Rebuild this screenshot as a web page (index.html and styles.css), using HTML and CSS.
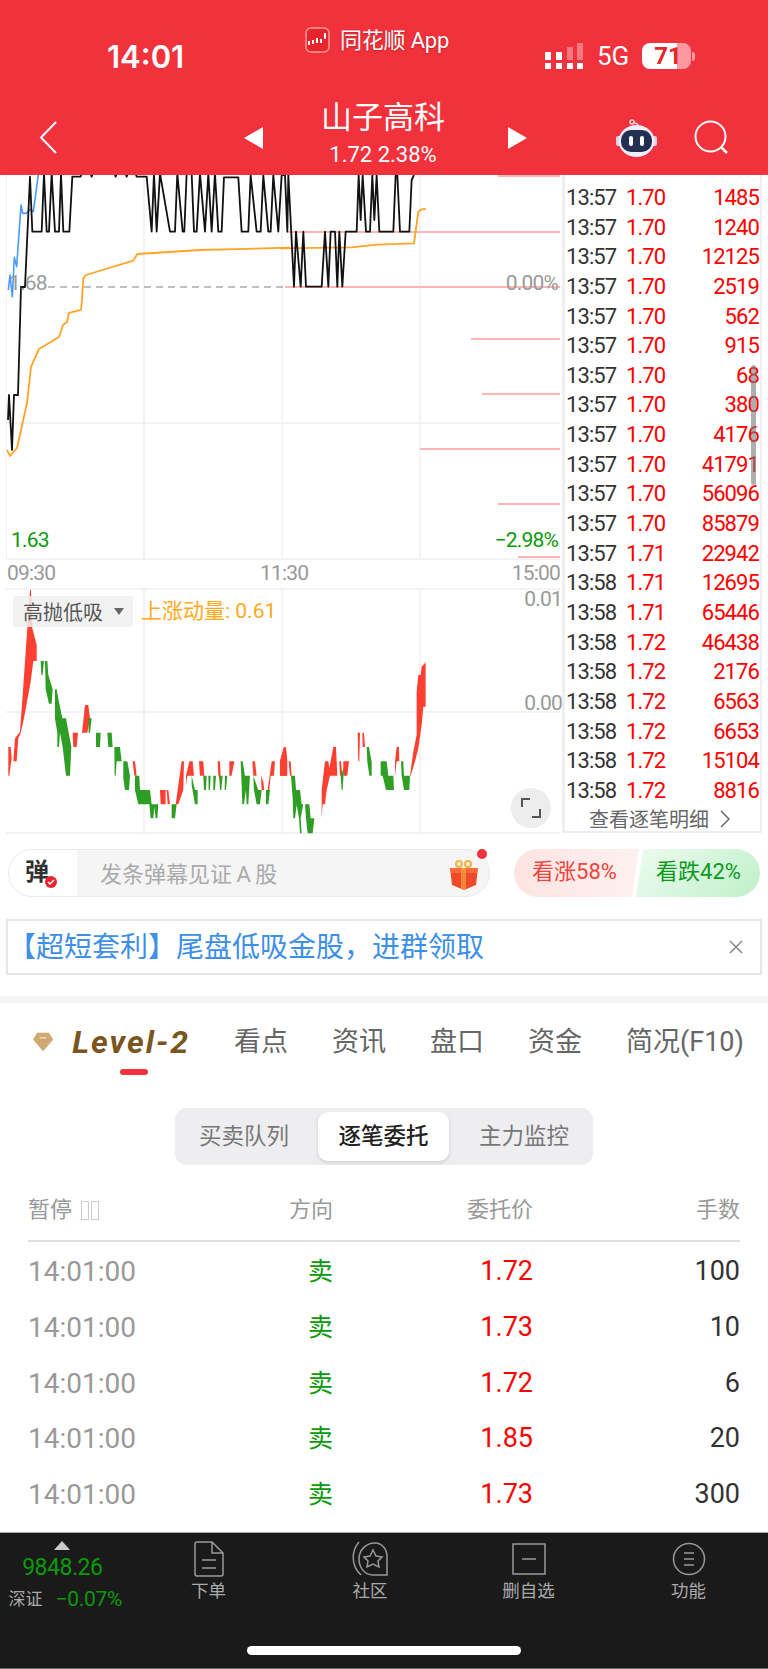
FILE: index.html
```html
<!DOCTYPE html>
<html lang="zh-CN">
<head>
    <meta charset="UTF-8">
    <meta name="viewport" content="width=device-width, initial-scale=1.0">
    <title>山子高科</title>
    <link rel="stylesheet" href="styles.css">
</head>
<body>
    <header class="top">
        <div class="status">
            <div class="clock">14:01</div>
            <div class="app-name">
                <svg class="app-icon" width="25" height="26" viewBox="0 0 25 26">
                    <rect x="1" y="1" width="23" height="24" rx="5" fill="#e8242c" stroke="#ff9a9a" stroke-width="1.5"/>
                    <path d="M4 14v4M8 13v4M12 11v5M16 12v4M20 6v6" stroke="#fff" stroke-width="2" fill="none"/>
                </svg>
                <span>同花顺 App</span>
            </div>
            <div class="sys">
                <svg width="38" height="26" viewBox="0 0 38 26">
                    <path d="M0 9h6v8H0zM11 9h6v8h-6z" fill="#fff"/>
                    <path d="M22 4h6v13h-6zM32 0h6v17h-6z" fill="#fff" opacity=".35"/>
                    <path d="M0 20h6v6H0zM11 20h6v6h-6zM22 20h6v6h-6zM32 20h6v6h-6z" fill="#fff"/>
                </svg>
                <span class="net">5G</span>
                <div class="battery">71</div>
                <div class="battery-nub"></div>
            </div>
        </div>
        <nav class="nav">
            <svg width="18" height="33" viewBox="0 0 18 33"><path d="M17 1L2 16.500 17 32" fill="none" stroke="#fff" stroke-width="2"/></svg>
            <div class="stock">
                <i class="tri tri-left"></i>
                <div class="stock-name">
                    <div class="name">山子高科</div>
                    <div class="change">1.72 2.38%</div>
                </div>
                <i class="tri tri-right"></i>
            </div>
            <svg width="41" height="38" viewBox="0 0 41 38">
                <circle cx="16" cy="3" r="2" fill="none" stroke="#f6d5d8" stroke-width="1.5"/>
                <path d="M18 4c3 0 4 1 4 3" fill="none" stroke="#f6d5d8" stroke-width="1.5"/>
                <rect x="0" y="17" width="5" height="10" rx="2" fill="#d9d2ee"/>
                <rect x="36" y="17" width="5" height="10" rx="2" fill="#d9d2ee"/>
                <ellipse cx="20.500" cy="22" rx="18" ry="16" fill="#f2eefc"/>
                <rect x="5" y="11" width="31" height="22" rx="10" fill="#233052"/>
                <rect x="13" y="17" width="4" height="10" rx="2" fill="#fff"/>
                <rect x="24" y="17" width="4" height="10" rx="2" fill="#fff"/>
            </svg>
            <svg width="36" height="36" viewBox="0 0 36 36">
                <circle cx="16.500" cy="16.500" r="15" fill="none" stroke="#fff" stroke-width="2"/>
                <path d="M27 27l6 6" stroke="#fff" stroke-width="2.500" fill="none"/>
            </svg>
        </nav>
    </header>

    <section class="quote">
        <div class="charts">
            <svg class="plot" width="556" height="660" viewBox="6 175 556 660">
                <!-- grid -->
                <path class="grid" d="M6 175V559M144 175V559M282 175V559M420 175V559M6 423H560M6 559H560M6 589H560M6 712H560M6 833H560M144 589V833M282 589V833M420 589V833"/>
                <path class="dash" d="M48 287H560"/>
                <!-- order lines -->
                <path class="order" d="M498 176H560M287 232H560M285 287H560M471 339H560M482 394H560M420 449H560M498 504H560M518 557H560"/>

                <g transform="translate(0 170) scale(.3333)">
                    <polyline class="ln ln-blue" points="25,360 30,315 37,380 43,262 50,290 63,105 68,130 78,130 90,118 100,125 115,15"/>
                    <polyline class="ln ln-black" points="24,750 27,675 36,840 42,675 54,675 63,351 75,351 90,20 97,185 125,185 132,10 140,185 147,185 155,10 165,185 177,185 183,10 190,185 208,185 217,20 242,20 245,5 270,5 275,20 280,5 342,5 347,20 352,5 375,5 380,20 385,5 405,5 410,20 440,20 455,185 462,10 470,185 480,10 510,185 525,185 532,10 548,185 553,185 560,10 575,10 582,185 590,185 600,10 615,185 625,10 635,185 645,10 655,185 665,185 672,22 715,22 725,185 745,185 752,15 770,185 782,185 790,15 805,185 812,185 820,15 835,185 845,15"/>
                    <polyline class="ln ln-orange" points="21,840 30,858 51,834 81,699 93,591 117,537 177,501 189,465 201,456 207,429 243,420 246,390 250,325 258,315 400,272 412,252 600,240 870,233"/>
                </g>
                <g transform="translate(280 170) scale(.3333)">
                    <polyline class="ln ln-orange" points="0,235 215,232 290,224 402,220 415,125 425,118 437,117"/>
                    <polyline class="ln ln-black" points="5,15 15,15 22,185 25,15 42,350 48,185 62,350 70,185 78,350 125,350 135,185 145,350 152,185 165,185 172,350 178,185 187,350 197,185 230,185 236,15 242,150 248,15 258,185 270,185 277,15 283,150 290,15 298,185 340,185 347,15 352,15 360,185 388,185 395,30 402,15"/>
                </g>

                <!-- lower chart bars -->
                <g class="bars-up" transform="translate(0 585) scale(.3333)">
                    <polygon points="25,486 32,486 35,520 28,572 25,572"/>
                    <polygon points="40,529 45,460 60,440 68,330 75,230 90,15 93,15 97,130 110,180 110,228 100,228 92,290 72,400 62,445 55,460 50,529"/>
                    <polygon points="218,443 234,443 230,486 220,486"/>
                    <polygon points="246,443 255,360 265,360 270,400 262,443"/>
                    <polygon points="398,529 405,529 410,572 403,572"/>
                    <polygon points="480,615 497,615 497,658 482,658"/>
                    <polygon points="500,615 505,615 510,658 503,658"/>
                    <polygon points="527,658 545,529 552,529 550,615 535,658"/>
                    <polygon points="558,572 568,529 578,529 582,572 562,572 560,600"/>
                    <polygon points="597,529 610,529 613,572 600,572"/>
                    <polygon points="653,529 660,529 663,600 655,570"/>
                    <polygon points="688,529 703,529 695,572 688,572"/>
                    <polygon points="757,529 765,529 770,572 760,572"/>
                    <polygon points="783,572 790,590 793,615 785,615"/>
                    <polygon points="815,529 825,529 822,572 812,572 808,615 803,615"/>
                    <polygon points="840,529 852,486 858,486 862,529 862,572 840,572"/>
                </g>
                <g class="bars-down" transform="translate(0 585) scale(.3333)">
                    <polygon points="122,228 132,228 128,270 124,270"/>
                    <polygon points="135,228 142,228 145,270 158,313 155,356 147,356 137,313"/>
                    <polygon points="165,313 170,313 178,356 187,400 198,400 214,486 210,572 198,572 188,486 180,443 177,486 172,486 172,443 165,400"/>
                    <polygon points="265,400 275,400 270,443 266,443"/>
                    <polygon points="288,443 302,443 300,486 288,486"/>
                    <polygon points="322,443 335,443 338,486 325,486"/>
                    <polygon points="343,486 360,486 365,529 350,529 347,572 344,572"/>
                    <polygon points="370,529 382,529 390,572 387,615 375,615 370,580"/>
                    <polygon points="405,572 418,572 420,615 450,615 455,658 475,658 472,700 467,700 463,665 460,700 452,700 448,658 415,658 405,615"/>
                    <polygon points="515,658 530,658 525,700 515,700"/>
                    <polygon points="575,572 585,615 593,615 593,658 585,658 575,600"/>
                    <polygon points="610,572 620,572 618,615 612,615"/>
                    <polygon points="625,572 632,572 630,615 626,615"/>
                    <polygon points="640,572 648,572 645,615 640,615"/>
                    <polygon points="658,572 668,572 664,615 660,615"/>
                    <polygon points="675,572 682,572 678,615 674,615"/>
                    <polygon points="722,529 728,529 735,572 750,572 745,658 740,658 738,615 732,658 727,658 725,600"/>
                    <polygon points="760,572 775,615 785,615 780,658 770,658 762,615"/>
                    <polygon points="798,615 810,615 805,658 798,658"/>
                </g>
                <g class="bars-up" transform="translate(280 585) scale(.3333)">
                    <polygon points="0,529 12,486 18,486 20,572 0,572"/>
                    <polygon points="26,529 32,529 35,572 30,572"/>
                    <polygon points="125,615 135,529 145,529 148,550 160,486 168,486 172,572 150,572 140,615 135,658 128,658 125,700"/>
                    <polygon points="178,529 183,529 187,572 180,572"/>
                    <polygon points="190,529 207,529 202,572 190,572"/>
                    <polygon points="233,443 240,443 238,529 235,529"/>
                    <polygon points="247,443 252,443 255,486 248,486"/>
                    <polygon points="345,529 350,486 357,486 358,529 350,529 345,572"/>
                    <polygon points="390,572 400,500 410,450 410,320 415,270 422,270 425,245 437,232 437,365 430,365 425,420 415,490 405,530 392,572"/>
                </g>
                <g class="bars-down" transform="translate(280 585) scale(.3333)">
                    <polygon points="33,572 45,572 48,615 60,615 65,658 70,658 62,700 65,745 60,745 57,700 50,660 45,700 40,700 38,640"/>
                    <polygon points="75,658 88,658 92,700 103,700 98,745 83,745 78,700"/>
                    <polygon points="182,572 192,545 188,615 185,615"/>
                    <polygon points="260,486 267,486 275,530 275,572 268,572 262,530"/>
                    <polygon points="302,529 320,529 325,572 340,572 342,615 318,615 308,572 302,572"/>
                    <polygon points="363,529 370,529 372,572 390,572 388,615 372,615 365,572"/>
                </g>
            </svg>

            <span class="tag tag-prev">1.68</span>
            <span class="tag tag-zero">0.00%</span>
            <span class="tag tag-low">1.63</span>
            <span class="tag tag-lowpct">−2.98%</span>
            <span class="tag tag-t1">09:30</span>
            <span class="tag tag-t2">11:30</span>
            <span class="tag tag-t3">15:00</span>
            <span class="tag tag-v1">0.01</span>
            <span class="tag tag-v0">0.00</span>

            <div class="signal-pick">高抛低吸<i class="caret"></i></div>
            <div class="momentum">上涨动量: 0.61</div>
            <div class="expand">
                <svg width="22" height="22" viewBox="0 0 22 22"><path d="M10 2H2v8M12 20h8v-8" fill="none" stroke="#555" stroke-width="2"/></svg>
            </div>
        </div>

        <aside class="ticks">
            <div class="tick"><span>13:57</span><b>1.70</b><b class="vol">1485</b></div>
            <div class="tick"><span>13:57</span><b>1.70</b><b class="vol">1240</b></div>
            <div class="tick"><span>13:57</span><b>1.70</b><b class="vol">12125</b></div>
            <div class="tick"><span>13:57</span><b>1.70</b><b class="vol">2519</b></div>
            <div class="tick"><span>13:57</span><b>1.70</b><b class="vol">562</b></div>
            <div class="tick"><span>13:57</span><b>1.70</b><b class="vol">915</b></div>
            <div class="tick"><span>13:57</span><b>1.70</b><b class="vol">68</b></div>
            <div class="tick"><span>13:57</span><b>1.70</b><b class="vol">380</b></div>
            <div class="tick"><span>13:57</span><b>1.70</b><b class="vol">4176</b></div>
            <div class="tick"><span>13:57</span><b>1.70</b><b class="vol">41791</b></div>
            <div class="tick"><span>13:57</span><b>1.70</b><b class="vol">56096</b></div>
            <div class="tick"><span>13:57</span><b>1.70</b><b class="vol">85879</b></div>
            <div class="tick"><span>13:57</span><b>1.71</b><b class="vol">22942</b></div>
            <div class="tick"><span>13:58</span><b>1.71</b><b class="vol">12695</b></div>
            <div class="tick"><span>13:58</span><b>1.71</b><b class="vol">65446</b></div>
            <div class="tick"><span>13:58</span><b>1.72</b><b class="vol">46438</b></div>
            <div class="tick"><span>13:58</span><b>1.72</b><b class="vol">2176</b></div>
            <div class="tick"><span>13:58</span><b>1.72</b><b class="vol">6563</b></div>
            <div class="tick"><span>13:58</span><b>1.72</b><b class="vol">6653</b></div>
            <div class="tick"><span>13:58</span><b>1.72</b><b class="vol">15104</b></div>
            <div class="tick"><span>13:58</span><b>1.72</b><b class="vol">8816</b></div>
            <div class="ticks-more">查看逐笔明细
                <svg width="10" height="18" viewBox="0 0 10 18"><path d="M1 1l8 8-8 8" fill="none" stroke="#666" stroke-width="1.500"/></svg>
            </div>
            <div class="scroll-thumb"></div>
        </aside>
    </section>

    <section class="actions">
        <div class="danmu">
            <div class="danmu-btn">
                <span>弹</span>
                <svg class="danmu-check" width="12" height="12" viewBox="0 0 12 12">
                    <circle cx="6" cy="6" r="6" fill="#e8242c"/>
                    <path d="M3 6l2 2 4-4" fill="none" stroke="#fff" stroke-width="1.500"/>
                </svg>
            </div>
            <div class="danmu-text">发条弹幕见证 A 股</div>
            <svg class="gift" width="30" height="30" viewBox="0 0 30 30">
                <circle cx="10" cy="4" r="3" fill="none" stroke="#f2b33d" stroke-width="2"/>
                <circle cx="19" cy="4" r="3" fill="none" stroke="#f2b33d" stroke-width="2"/>
                <path d="M1 8h28l-2 17-12 5-12-5z" fill="#ee4b2b"/>
                <path d="M1 8h28l-1 5H2z" fill="#f86a3a"/>
                <path d="M12 8h5v22h-3l-2-1z" fill="#f9a03f" opacity=".7"/>
            </svg>
            <i class="gift-dot"></i>
        </div>
        <div class="vote">
            <div class="vote-up">看涨58%</div>
            <div class="vote-down">看跌42%</div>
        </div>
    </section>

    <div class="banner">
        <span>【超短套利】尾盘低吸金股，进群领取</span>
        <svg width="14" height="14" viewBox="0 0 14 14"><path d="M1 1l12 12M13 1L1 13" stroke="#888" stroke-width="1.500" fill="none"/></svg>
    </div>

    <div class="sep"></div>

    <div class="tabs">
        <div class="tab tab-level">
            <svg width="24" height="22" viewBox="0 0 24 22"><path d="M5 0h14l5 8-12 14L0 8z" fill="#cfa971"/><path d="M8 6h8" stroke="#f3e3c6" stroke-width="1.500"/></svg>
            <span class="level-word">Level-2</span>
        </div>
        <div class="tab">看点</div>
        <div class="tab">资讯</div>
        <div class="tab">盘口</div>
        <div class="tab">资金</div>
        <div class="tab">简况(F10)</div>
    </div>

    <div class="segments">
        <div class="seg seg-first">买卖队列</div>
        <div class="seg seg-on">逐笔委托</div>
        <div class="seg seg-last">主力监控</div>
    </div>

    <div class="orders">
        <div class="order-row order-head">
            <div class="pause">暂停<i class="pause-bar"></i><i class="pause-bar"></i></div>
            <div>方向</div>
            <div>委托价</div>
            <div>手数</div>
        </div>
        <div class="order-row"><div class="time">14:01:00</div><div class="sell">卖</div><div class="price">1.72</div><div>100</div></div>
        <div class="order-row"><div class="time">14:01:00</div><div class="sell">卖</div><div class="price">1.73</div><div>10</div></div>
        <div class="order-row"><div class="time">14:01:00</div><div class="sell">卖</div><div class="price">1.72</div><div>6</div></div>
        <div class="order-row"><div class="time">14:01:00</div><div class="sell">卖</div><div class="price">1.85</div><div>20</div></div>
        <div class="order-row"><div class="time">14:01:00</div><div class="sell">卖</div><div class="price">1.73</div><div>300</div></div>
    </div>

    <footer class="bottom">
        <div class="bar">
            <div class="index">
                <i class="index-arrow"></i>
                <div class="index-value">9848.26</div>
                <div class="index-line"><span>深证</span><b>−0.07%</b></div>
            </div>
            <div class="tool">
                <svg width="30" height="36" viewBox="0 0 30 36"><path d="M3 1h15l11 11v21a2 2 0 0 1-2 2H3a2 2 0 0 1-2-2V3a2 2 0 0 1 2-2zM18 1v11h11M8 19h14M8 27h14" fill="none" stroke="#999" stroke-width="1.500"/></svg>
                <span>下单</span>
            </div>
            <div class="tool tool-shift">
                <svg width="36" height="36" viewBox="0 0 36 36"><path d="M7 1C-1 10-1 25 9 34M23 2c7 0 12 6 12 14v18H21C13 34 7 27 7 18S14 2 23 2z" fill="none" stroke="#999" stroke-width="1.500"/><path d="M21 9l3 6 6 1-4 4 1 6-6-3-6 3 1-6-4-4 6-1z" fill="none" stroke="#999" stroke-width="1.500"/></svg>
                <span>社区</span>
            </div>
            <div class="tool">
                <svg width="34" height="36" viewBox="0 0 34 36"><path d="M1 3h32v30H1zM10 18h14" fill="none" stroke="#999" stroke-width="1.500"/></svg>
                <span>删自选</span>
            </div>
            <div class="tool">
                <svg width="34" height="36" viewBox="0 0 34 36"><circle cx="17" cy="18" r="15.500" fill="none" stroke="#999" stroke-width="1.500"/><path d="M12 12h10M12 18h10M12 24h10" stroke="#999" stroke-width="1.500" fill="none"/></svg>
                <span>功能</span>
            </div>
        </div>
        <div class="home-bar"></div>
    </footer>
</body>
</html>
```

FILE: styles.css
```css
/* base */
body {
    width: 768px;
    height: 1669px;
    margin: 0;
    overflow: hidden;
    background: #fff;
    color: #333;
    font-family: Roboto, "Noto Sans CJK SC", sans-serif;
}

/* red header */
.top {
    height: 175px;
    background: #f1313b;
    color: #fff;
}

.status {
    display: grid;
    grid-template-columns: 198px 240px 1fr;
    height: 100px;
    padding-left: 107px;
}

.clock {
    margin-top: 38px;
    font-family: Inter, sans-serif;
    font-size: 31px;
    font-weight: 600;
    line-height: 38px;
}

.app-name {
    display: flex;
    align-items: center;
    gap: 10px;
    height: 26px;
    margin-top: 27px;
    font-size: 22px;
    letter-spacing: -.2px;
    white-space: nowrap;
    text-shadow: 0 1px 2px rgba(0, 0, 0, .25);
}

.app-name span {
    margin-bottom: 5px;
}

.app-icon {
    flex: none;
}

.sys {
    display: flex;
    align-items: center;
    height: 26px;
    margin-top: 43px;
}

.net {
    margin: 0 13px 0 14px;
    font-size: 26px;
}

.battery {
    width: 49px;
    height: 26px;
    border-radius: 8px;
    background: linear-gradient(90deg, #fff 35px, #fa9aa0 35px);
    color: #e8242c;
    font-size: 24px;
    font-weight: 700;
    line-height: 26px;
    text-indent: 12px;
}

.battery-nub {
    width: 3px;
    height: 9px;
    margin-left: 1px;
    border-radius: 0 3px 3px 0;
    background: #fa9aa0;
}

.nav {
    display: grid;
    grid-template-columns: 205px 372px 78px 36px;
    align-items: center;
    height: 75px;
    padding-left: 39px;
}

.stock {
    display: flex;
    align-items: center;
    justify-content: space-between;
    width: 283px;
}

.stock-name {
    margin: -10px 5px 0 0;
    text-align: center;
}

.tri {
    width: 0;
    height: 0;
    border-top: 11px solid transparent;
    border-bottom: 11px solid transparent;
}

.tri-left {
    border-right: 19px solid #fff;
}

.tri-right {
    border-left: 19px solid #fff;
}

.name {
    font-size: 31px;
    line-height: 40px;
}

.change {
    margin-top: 5px;
    font-size: 22px;
    line-height: 24px;
}

/* chart and tick list */
.quote {
    display: flex;
    width: 756px;
    height: 660px;
    margin-left: 6px;
}

.charts {
    position: relative;
    flex: none;
    width: 556px;
}

.plot {
    display: block;
}

.grid {
    fill: none;
    stroke: #efefef;
    stroke-width: 1.5;
}

.dash {
    fill: none;
    stroke: #aaa;
    stroke-width: 1.5;
    stroke-dasharray: 7 5;
}

.order {
    fill: none;
    stroke: #ffb5b5;
    stroke-width: 2;
}

.ln {
    fill: none;
    vector-effect: non-scaling-stroke;
    stroke-linejoin: round;
}

.ln-black {
    stroke: #111;
    stroke-width: 1.8;
}

.ln-orange {
    stroke: #ffa424;
    stroke-width: 1.8;
}

.ln-blue {
    stroke: #4a9bf5;
    stroke-width: 1.6;
}

.bars-up {
    fill: #ff3f30;
}

.bars-down {
    fill: #2f9e24;
}

.tag {
    position: absolute;
    color: #999;
    font-size: 21px;
    line-height: 24px;
    letter-spacing: -.8px;
    white-space: nowrap;
}

.tag-prev { left: 3px; top: 96px; }
.tag-zero { right: 4px; top: 96px; }
.tag-low { left: 5px; top: 353px; color: #0a9a0a; }
.tag-lowpct { right: 4px; top: 353px; color: #0a9a0a; }
.tag-t1 { left: 1px; top: 386px; }
.tag-t2 { left: 254px; top: 386px; }
.tag-t3 { right: 2px; top: 386px; }
.tag-v1 { right: 0; top: 412px; }
.tag-v0 { right: 0; top: 516px; }

.signal-pick {
    position: absolute;
    left: 7px;
    top: 421px;
    display: flex;
    align-items: center;
    width: 120px;
    height: 31px;
    padding-left: 10px;
    box-sizing: border-box;
    border-radius: 3px;
    background: rgba(240, 240, 240, .85);
    color: #555;
    font-size: 20px;
}

.caret {
    width: 0;
    height: 0;
    margin-left: 11px;
    border-top: 7px solid #666;
    border-left: 5px solid transparent;
    border-right: 5px solid transparent;
}

.momentum {
    position: absolute;
    left: 135px;
    top: 422px;
    color: #ffa81a;
    font-size: 21px;
    line-height: 28px;
    white-space: nowrap;
}

.expand {
    position: absolute;
    left: 505px;
    top: 613px;
    display: flex;
    align-items: center;
    justify-content: center;
    width: 40px;
    height: 40px;
    border-radius: 50%;
    background: #ededed;
}

.ticks {
    position: relative;
    flex: 1;
    box-sizing: border-box;
    height: 658px;
    padding-top: 8px;
    border-left: 3px solid #eee;
    border-right: 2px solid #eee;
    border-bottom: 2px solid #eee;
}

.tick {
    display: grid;
    grid-template-columns: 60px 44px 1fr;
    height: 29.650px;
    padding: 0 1px;
    font-size: 22px;
    line-height: 29.650px;
    letter-spacing: -.9px;
}

.tick b {
    color: #f00;
    font-weight: 400;
}

.tick .vol {
    text-align: right;
}

.ticks-more {
    display: flex;
    align-items: center;
    gap: 11px;
    height: 27px;
    padding-left: 24px;
    color: #666;
    font-size: 20px;
}

.scroll-thumb {
    position: absolute;
    right: 4px;
    top: 190px;
    width: 5px;
    height: 120px;
    border-radius: 3px;
    background: rgba(120, 120, 120, .6);
}

/* danmu row */
.actions {
    display: flex;
    justify-content: space-between;
    height: 48px;
    margin: 14px 8px 0;
}

.danmu {
    position: relative;
    display: flex;
    align-items: center;
    width: 482px;
    box-sizing: border-box;
    border: 1px solid #eaeaea;
    border-radius: 24px;
    background: #f5f5f5;
}

.danmu-btn {
    position: relative;
    width: 68px;
    height: 46px;
    border-radius: 23px 0 0 23px;
    background: #fff;
    color: #333;
    font-size: 24px;
    font-weight: 700;
    line-height: 44px;
    text-indent: 16px;
}

.danmu-check {
    position: absolute;
    left: 36px;
    top: 26px;
}

.danmu-text {
    margin: 0 0 3px 23px;
    color: #aaa;
    font-size: 22px;
    word-spacing: -1px;
}

.gift {
    position: absolute;
    left: 440px;
    top: 10px;
}

.gift-dot {
    position: absolute;
    left: 468px;
    top: -1px;
    width: 10px;
    height: 10px;
    border-radius: 50%;
    background: #f0323c;
}

.vote {
    display: flex;
    width: 246px;
    font-size: 22px;
    line-height: 46px;
    text-align: center;
}

.vote-up {
    flex: none;
    width: 125px;
    padding-right: 4px;
    box-sizing: border-box;
    border-radius: 24px 0 0 24px;
    background: linear-gradient(90deg, #fee4e2, #fdf1ef);
    color: #f4433c;
    clip-path: polygon(0 0, 100% 0, calc(100% - 7px) 100%, 0 100%);
}

.vote-down {
    flex: none;
    width: 124px;
    margin-left: -3px;
    padding-left: 1px;
    box-sizing: border-box;
    border-radius: 0 24px 24px 0;
    background: linear-gradient(135deg, #eefbf0, #bff0ca);
    color: #0a9a1a;
    clip-path: polygon(7px 0, 100% 0, 100% 100%, 0 100%);
}

/* promo banner */
.banner {
    display: flex;
    align-items: center;
    justify-content: space-between;
    box-sizing: border-box;
    width: 756px;
    height: 56px;
    margin: 22px 0 0 6px;
    padding: 0 17px 0 0;
    border: 2px solid #e6e6e6;
    color: #3d8fe8;
    font-size: 28px;
}

.banner span {
    margin-bottom: 4px;
}

.sep {
    height: 7px;
    margin-top: 21px;
    background: #f5f5f5;
}

/* tabs */
.tabs {
    display: flex;
    gap: 44px;
    height: 72px;
    padding-left: 33px;
    color: #666;
    font-size: 27px;
    line-height: 79px;
}

.tab {
    white-space: nowrap;
}

.tab-level {
    position: relative;
    display: flex;
    align-items: center;
    gap: 19px;
    width: 157px;
    height: 78px;
}

.tab-level::after {
    content: "";
    position: absolute;
    left: 87px;
    top: 66px;
    width: 28px;
    height: 6px;
    border-radius: 3px;
    background: #f2323c;
}

.level-word {
    color: #7a5520;
    font-size: 32px;
    font-style: italic;
    font-weight: 700;
    letter-spacing: 2px;
}

/* segmented switch */
.segments {
    display: flex;
    width: 418px;
    height: 57px;
    margin: 33px 0 0 175px;
    padding: 4px 0;
    box-sizing: border-box;
    border-radius: 12px;
    background: #eeeef0;
    color: #777;
    font-size: 22.500px;
    line-height: 49px;
    text-align: center;
}

.seg-first {
    width: 138px;
    margin-right: 5px;
}

.seg-last {
    width: 138px;
    padding-left: 6px;
}

.seg-on {
    width: 131px;
    border-radius: 10px;
    background: #fff;
    box-shadow: 0 2px 4px rgba(0, 0, 0, .12);
    color: #222;
    font-weight: 500;
}

/* order table */
.orders {
    margin: 15px 28px 0;
}

.order-row {
    display: grid;
    grid-template-columns: 172px 133px 200px 207px;
    height: 55.800px;
    font-size: 27px;
    line-height: 57.500px;
    text-align: right;
}

.order-head {
    height: 60px;
    margin-bottom: 1px;
    border-bottom: 2px solid #e0e0e0;
    color: #999;
    font-size: 22px;
    line-height: 60px;
}

.pause {
    display: flex;
    align-items: center;
    text-align: left;
}

.pause-bar {
    width: 6px;
    height: 17px;
    margin-right: 2px;
    border: 1px solid #ccc;
}

.pause-bar:first-of-type {
    margin-left: 9px;
}

.time {
    color: #999;
    font-size: 28px;
    text-align: left;
}

.sell {
    color: #0a9a0a;
    font-size: 25px;
}

.price {
    color: #f00;
}

/* bottom bar */
.bottom {
    position: relative;
    box-sizing: border-box;
    height: 137px;
    margin-top: 10px;
    border-top: 1px solid #aaa;
    border-bottom: 1px solid #666;
    background: #1a1a1a;
    color: #aaa;
}

.bar {
    display: flex;
    padding: 8px 0 0 8px;
}

.index {
    display: flex;
    flex-direction: column;
    align-items: center;
    width: 120.500px;
    padding-right: 12px;
    box-sizing: border-box;
    flex: none;
}

.index-arrow {
    width: 0;
    height: 0;
    border-bottom: 9px solid #ccc;
    border-left: 8px solid transparent;
    border-right: 8px solid transparent;
}

.index-value {
    margin-top: 4px;
    color: #0a9a0a;
    font-size: 23px;
    line-height: 28px;
    letter-spacing: -.5px;
}

.index-line {
    display: flex;
    align-items: center;
    gap: 13px;
    margin: 3px 0 0 6px;
    font-size: 17px;
    line-height: 28px;
    white-space: nowrap;
}

.index-line b {
    color: #0a9a0a;
    font-size: 21px;
    font-weight: 400;
    letter-spacing: -.3px;
}

.tool {
    display: flex;
    flex: none;
    flex-direction: column;
    align-items: center;
    width: 160px;
    box-sizing: border-box;
    font-size: 17.500px;
    line-height: 24px;
}

.tool-shift {
    padding-left: 3px;
}

.tool span {
    margin-top: 2px;
}

.home-bar {
    position: absolute;
    left: 247px;
    top: 113px;
    width: 274px;
    height: 9px;
    border-radius: 5px;
    background: #fff;
}
```
